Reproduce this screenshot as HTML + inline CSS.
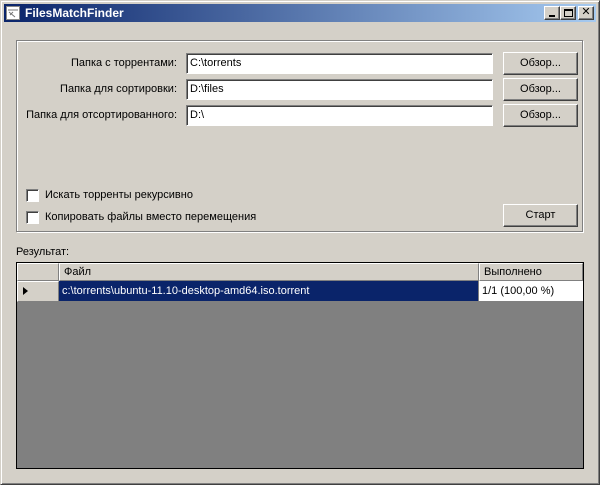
<!DOCTYPE html>
<html><head><meta charset="utf-8"><style>
*{margin:0;padding:0;box-sizing:border-box}
body{width:600px;height:485px;background:#d4d0c8;font-family:"Liberation Sans","DejaVu Sans",sans-serif;font-size:11px;color:#000;position:relative;overflow:hidden}
.a{position:absolute}
.win{left:0;top:0;width:600px;height:485px;border:1px solid;border-color:#d4d0c8 #404040 #404040 #d4d0c8;box-shadow:inset 1px 1px 0 #fff,inset -1px -1px 0 #808080}
.title{left:4px;top:4px;width:592px;height:18px;background:linear-gradient(90deg,#0a246a,#a6caf0);color:#fff;font-weight:bold;font-size:12px;line-height:18px;padding-left:21px}
.tb{top:6px;width:16px;height:14px;background:#d4d0c8;border:1px solid;border-color:#fff #404040 #404040 #fff;box-shadow:inset -1px -1px 0 #808080}
.grp{left:16px;top:40px;width:567px;height:192px;border:1px solid #808080;box-shadow:1px 1px 0 #fff,inset 1px 1px 0 #fff}
.lbl{width:177px;text-align:right;left:0}
.tx{left:186px;width:307px;height:21px;background:#fff;border:1px solid;border-color:#808080 #fff #fff #808080;box-shadow:inset 1px 1px 0 #404040;padding:3px 0 0 3px}
.btn{left:503px;width:75px;height:23px;border:1px solid;border-color:#fff #404040 #404040 #fff;box-shadow:inset -1px -1px 0 #808080;text-align:center;line-height:20px}
.cb{left:26px;width:13px;height:13px;background:#fff;border:1px solid;border-color:#808080 #fff #fff #808080;box-shadow:inset 1px 1px 0 #404040}
.grid{left:16px;top:262px;width:568px;height:207px;background:#808080;border:1px solid #000}
.hc{top:0;height:18px;border:1px solid;border-color:#fff #808080 #808080 #fff;background:#d4d0c8;padding:2px 0 0 4px}
</style></head><body>
<div class="a win"></div>
<div class="a title">FilesMatchFinder</div>
<svg class="a" style="left:6px;top:6px" width="14" height="14"><rect x="0.5" y="0.5" width="13" height="13" fill="#fff" stroke="#888"/><path d="M2 4h10M3 6l6 5M4 9l3-3" stroke="#777" fill="none"/></svg>
<div class="a tb" style="left:544px"><div class="a" style="left:4px;top:8px;width:6px;height:2px;background:#000"></div></div>
<div class="a tb" style="left:560px"><div class="a" style="left:3px;top:2px;width:9px;height:8px;border:1px solid #000;border-top-width:2px"></div></div>
<div class="a tb" style="left:578px;font-size:11px;font-weight:bold;text-align:center;line-height:11px">✕</div>
<div class="a grp"></div>
<div class="a lbl" style="top:57px">Папка с торрентами:</div>
<div class="a lbl" style="top:83px">Папка для сортировки:</div>
<div class="a lbl" style="top:109px">Папка для отсортированного:</div>
<div class="a tx" style="top:53px">C:\torrents</div>
<div class="a tx" style="top:79px">D:\files</div>
<div class="a tx" style="top:105px">D:\</div>
<div class="a btn" style="top:52px">Обзор...</div>
<div class="a btn" style="top:78px">Обзор...</div>
<div class="a btn" style="top:104px">Обзор...</div>
<div class="a cb" style="top:189px"></div>
<div class="a" style="left:45px;top:189px">Искать торренты рекурсивно</div>
<div class="a cb" style="top:211px"></div>
<div class="a" style="left:45px;top:211px">Копировать файлы вместо перемещения</div>
<div class="a btn" style="top:204px">Старт</div>
<div class="a" style="left:16px;top:246px">Результат:</div>
<div class="a grid">
<div class="a hc" style="left:0;width:42px"></div>
<div class="a hc" style="left:42px;width:420px">Файл</div>
<div class="a hc" style="left:462px;width:104px">Выполнено</div>
<div class="a" style="left:0;top:18px;width:42px;height:21px;background:#d4d0c8;border:1px solid;border-color:#fff #808080 #808080 #fff"></div>
<div class="a" style="left:6px;top:24px;width:0;height:0;border-left:5px solid #000;border-top:4px solid transparent;border-bottom:4px solid transparent"></div>
<div class="a" style="left:42px;top:18px;width:420px;height:21px;background:#0a246a;color:#fff;padding:4px 0 0 3px;border-right:1px solid #808080;border-bottom:1px solid #808080">c:\torrents\ubuntu-11.10-desktop-amd64.iso.torrent</div>
<div class="a" style="left:462px;top:18px;width:104px;height:21px;background:#fff;padding:4px 0 0 3px;border-bottom:1px solid #808080">1/1 (100,00 %)</div>
</div>
</body></html>
